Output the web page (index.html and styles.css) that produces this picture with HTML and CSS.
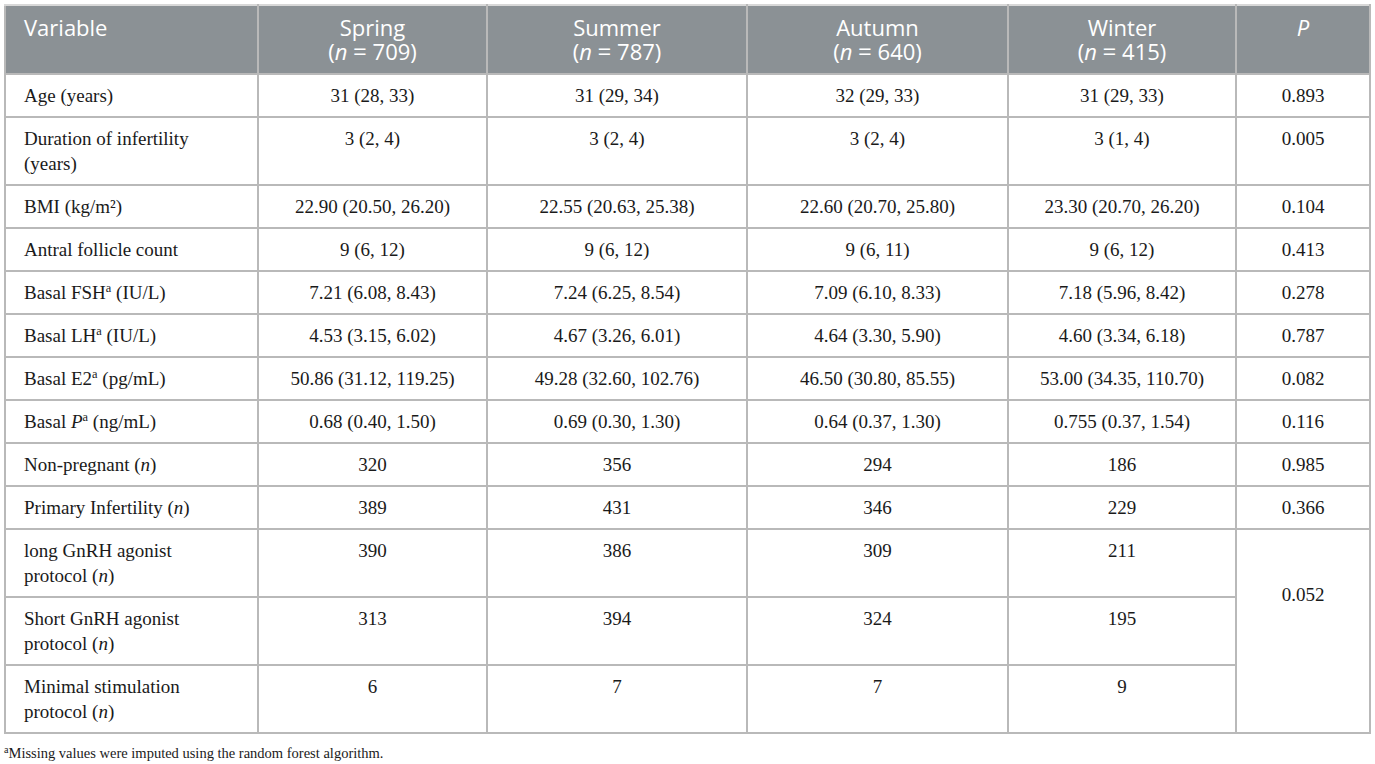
FILE: index.html
```html
<!DOCTYPE html>
<html lang="en">
<head>
<meta charset="utf-8">
<title>Table</title>
<link rel="stylesheet" href="styles.css">
</head>
<body>
<table class="data">
  <colgroup>
    <col class="c-var">
    <col class="c-spring">
    <col class="c-summer">
    <col class="c-autumn">
    <col class="c-winter">
    <col class="c-p">
  </colgroup>
  <thead>
    <tr>
      <th class="left">Variable</th>
      <th><span class="hl">Spring</span><span class="hl">(<i>n</i> <span class="eq">=</span> 709)</span></th>
      <th><span class="hl">Summer</span><span class="hl">(<i>n</i> <span class="eq">=</span> 787)</span></th>
      <th><span class="hl">Autumn</span><span class="hl">(<i>n</i> <span class="eq">=</span> 640)</span></th>
      <th><span class="hl">Winter</span><span class="hl">(<i>n</i> <span class="eq">=</span> 415)</span></th>
      <th><i>P</i></th>
    </tr>
  </thead>
  <tbody>
    <tr><td class="left">Age (years)</td><td>31 (28, 33)</td><td>31 (29, 34)</td><td>32 (29, 33)</td><td>31 (29, 33)</td><td>0.893</td></tr>
    <tr><td class="left">Duration of infertility<br>(years)</td><td>3 (2, 4)</td><td>3 (2, 4)</td><td>3 (2, 4)</td><td>3 (1, 4)</td><td>0.005</td></tr>
    <tr><td class="left">BMI (kg/m²)</td><td>22.90 (20.50, 26.20)</td><td>22.55 (20.63, 25.38)</td><td>22.60 (20.70, 25.80)</td><td>23.30 (20.70, 26.20)</td><td>0.104</td></tr>
    <tr><td class="left">Antral follicle count</td><td>9 (6, 12)</td><td>9 (6, 12)</td><td>9 (6, 11)</td><td>9 (6, 12)</td><td>0.413</td></tr>
    <tr><td class="left">Basal FSH<sup>a</sup> (IU/L)</td><td>7.21 (6.08, 8.43)</td><td>7.24 (6.25, 8.54)</td><td>7.09 (6.10, 8.33)</td><td>7.18 (5.96, 8.42)</td><td>0.278</td></tr>
    <tr><td class="left">Basal LH<sup>a</sup> (IU/L)</td><td>4.53 (3.15, 6.02)</td><td>4.67 (3.26, 6.01)</td><td>4.64 (3.30, 5.90)</td><td>4.60 (3.34, 6.18)</td><td>0.787</td></tr>
    <tr><td class="left">Basal E2<sup>a</sup> (pg/mL)</td><td>50.86 (31.12, 119.25)</td><td>49.28 (32.60, 102.76)</td><td>46.50 (30.80, 85.55)</td><td>53.00 (34.35, 110.70)</td><td>0.082</td></tr>
    <tr><td class="left">Basal <i>P</i><sup>a</sup> (ng/mL)</td><td>0.68 (0.40, 1.50)</td><td>0.69 (0.30, 1.30)</td><td>0.64 (0.37, 1.30)</td><td>0.755 (0.37, 1.54)</td><td>0.116</td></tr>
    <tr><td class="left">Non-pregnant (<i>n</i>)</td><td>320</td><td>356</td><td>294</td><td>186</td><td>0.985</td></tr>
    <tr><td class="left">Primary Infertility (<i>n</i>)</td><td>389</td><td>431</td><td>346</td><td>229</td><td>0.366</td></tr>
    <tr><td class="left">long GnRH agonist<br>protocol (<i>n</i>)</td><td>390</td><td>386</td><td>309</td><td>211</td><td rowspan="3" class="merged">0.052</td></tr>
    <tr><td class="left">Short GnRH agonist<br>protocol (<i>n</i>)</td><td>313</td><td>394</td><td>324</td><td>195</td></tr>
    <tr><td class="left">Minimal stimulation<br>protocol (<i>n</i>)</td><td>6</td><td>7</td><td>7</td><td>9</td></tr>
  </tbody>
</table>
<p class="note"><sup>a</sup>Missing values were imputed using the random forest algorithm.</p>
</body>
</html>
```
FILE: styles.css
```css
html, body {
  margin: 0;
  padding: 0;
  background: #ffffff;
}
body {
  padding: 4px 0 0 4px;
  font-family: "Liberation Serif", "Times New Roman", serif;
  color: #1a1a1a;
}
.data {
  border-collapse: collapse;
  width: 1365px;
  table-layout: fixed;
  border: 2px solid #b9b9b9;
}
.c-var { width: 253px; }
.c-spring { width: 229px; }
.c-summer { width: 260px; }
.c-autumn { width: 261px; }
.c-winter { width: 228px; }
.c-p { width: 134px; }

.data th {
  background: #8b9195;
  color: #ffffff;
  font-family: "Open Sans", "DejaVu Sans", sans-serif;
  font-weight: 400;
  font-size: 22px;
  line-height: 24px;
  padding: 9px 18px 10px;
  height: 48px;
  text-align: center;
  vertical-align: top;
  border: 2px solid #b9b9b9;
  border-top-color: #d8d8d8;
}
.data th .hl {
  display: block;
}
.data th i { font-style: italic; }
.data th .eq {
  font-size: 1.1em;
  line-height: 20px;
}
.data td {
  font-size: 19px;
  line-height: 25px;
  padding: 8px 18px 8px;
  text-align: center;
  vertical-align: top;
  border: 2px solid #b9b9b9;
}
.data .left { text-align: left; }
.data td.merged {
  padding-top: 52px;
}
sup {
  font-size: 0.65em;
  line-height: 0;
  vertical-align: 0.55em;
}
.note {
  margin: 11px 0 0 0;
  font-family: "Liberation Serif", "Times New Roman", serif;
  font-size: 14.5px;
  line-height: 17px;
  color: #1a1a1a;
}
.note sup { font-size: 0.7em; vertical-align: 0.5em; }
```
